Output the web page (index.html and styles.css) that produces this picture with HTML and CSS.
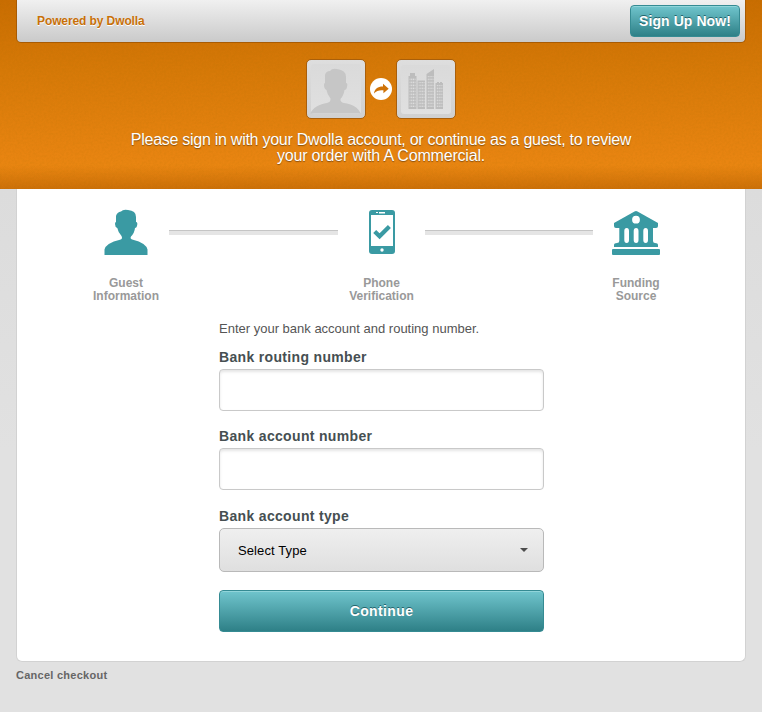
FILE: index.html
```html
<!DOCTYPE html>
<html lang="en">
<head>
<meta charset="utf-8">
<title>Dwolla Checkout</title>
<link rel="stylesheet" href="styles.css">
</head>
<body>
<header class="hero">
  <svg class="grain" width="100%" height="100%" aria-hidden="true">
    <filter id="grain"><feTurbulence type="fractalNoise" baseFrequency="0.45" numOctaves="2"/><feColorMatrix values="0 0 0 0 0.35  0 0 0 0 0.15  0 0 0 0 0  1 0 0 0 -0.35"/></filter>
    <rect width="100%" height="100%" filter="url(#grain)"/>
  </svg>
  <div class="topbar">
    <span class="powered">Powered by Dwolla</span>
    <button class="btn signup">Sign Up Now!</button>
  </div>
  <div class="parties">
    <div class="avatar">
      <svg width="58" height="58" viewBox="0 0 58 58">
        <rect x="4" y="4" width="50" height="50" rx="3" fill="url(#plate)"/>
        <path fill="#c6c6c6" d="M3.500 53.500C5 48 13 44 20 43Q24 42 23.500 38.500Q20 34 19.500 30Q17 29 17 25Q17 23 18 23V15Q19 11 23 11Q25 8 30 9Q39 10 39 17V23Q41 23 40 27Q39.500 30 37.500 30Q36.500 36 33.500 39Q33 42 37 43C45 44 52 48 53.500 53.500Z"/>
      </svg>
    </div>
    <svg class="arrow" width="22" height="22" viewBox="0 0 22 22">
      <circle cx="11" cy="11" r="11" fill="#fff"/>
      <path fill="#cf7308" d="M4 15.500C4.500 11 8 8.500 13 8.600V5.700L18.700 10.700L13.400 15.300V12.300C9.500 11.800 6.500 12.800 4 15.500Z"/>
    </svg>
    <div class="avatar">
      <svg width="58" height="58" viewBox="0 0 58 58">
        <defs>
          <linearGradient id="plate" x2="0" y2="1"><stop stop-color="#dadada"/><stop offset="1" stop-color="#e0e0e0"/></linearGradient>
          <pattern id="windows" width="2.2" height="3" patternUnits="userSpaceOnUse"><path fill="#dedede" d="M.4 .6h1.300v1.600H.4z"/></pattern>
        </defs>
        <rect x="4" y="5" width="50" height="49" rx="3" fill="url(#plate)"/>
        <path fill="#bdbdbd" d="M11.500 49V16H13V13H18V16H19.500V49ZM20.500 49V20.500H28V49ZM29.500 49V14L37 9V49ZM38.500 49V23H40V22H42V23H43V22H45V23H46V49Z"/>
        <path fill="url(#windows)" d="M12.500 18H18.500V47H12.500ZM21.500 22H27.500V47H21.500ZM30.500 16H36.500V47H30.500ZM39.500 25H45.500V47H39.500Z"/>
      </svg>
    </div>
  </div>
  <p class="intro"><span class="line1">Please sign in with your Dwolla account, or continue as a guest, to review</span><br><span class="line2">your order with A Commercial.</span></p>
</header>
<main class="sheet">
  <div class="steps">
    <div class="step guest">
      <svg width="44" height="48" viewBox="0 0 44 48">
        <path fill="#3a9aa3" d="M.5 47V41.500Q2 35 16 31.700Q19 31 17.500 28Q14 24 13.300 20Q11 19 11 16Q11 14 12 14V8Q13 4 17 3.500Q19 1 24 2Q32 2.500 32 9V14Q34 14 33 18Q32.500 20 31 20Q30.500 25 27 28.500Q25.500 31 29 31.700Q42 35 43.500 41.500V47Z"/>
      </svg>
      <div class="caption">Guest<br>Information</div>
    </div>
    <i class="rail"></i>
    <div class="step phone">
      <svg width="44" height="48" viewBox="0 0 44 48">
        <rect x="9" y="2" width="26" height="44" rx="3" fill="#3a9aa3"/>
        <path fill="#fff" d="M11 7H33V38H11ZM16 4H18V5H16ZM19 4H25V5.500H19Z"/>
        <circle cx="22" cy="42" r="1.700" fill="#fff"/>
        <path fill="none" stroke="#3a9aa3" stroke-width="4.200" d="M14.700 23.500L19.600 28.300L29.400 18.500"/>
      </svg>
      <div class="caption">Phone<br>Verification</div>
    </div>
    <i class="rail"></i>
    <div class="step bank">
      <svg width="48" height="48" viewBox="0 0 48 48">
        <path fill="#3a9aa3" fill-rule="evenodd" d="M2 18V15L22.500 3.500Q24 2.500 25.500 3.500L46 15V18Q46 20 44 20H4Q2 20 2 18ZM27.900 11.700A3.900 3.900 0 1 0 20.100 11.700A3.900 3.900 0 1 0 27.900 11.700Z"/>
        <path fill="#3a9aa3" d="M7.300 19H41V33Q41 35 43 35Q46 35 46 37V39H2V37Q2 35 5 35Q7.300 35 7.300 33Z"/>
        <path fill="#fff" d="M12.300 23Q12.300 20 14.700 20Q17 20 17 23V32Q17 35 14.700 35Q12.300 35 12.300 32ZM21.700 23Q21.700 20 24.100 20Q26.500 20 26.500 23V32Q26.500 35 24.100 35Q21.700 35 21.700 32ZM31.300 23Q31.300 20 33.700 20Q36 20 36 23V32Q36 35 33.700 35Q31.300 35 31.300 32Z"/>
        <path fill="#3a9aa3" d="M0 42Q0 41 1 41H47Q48 41 48 42V46Q48 47 47 47H1Q0 47 0 46Z"/>
      </svg>
      <div class="caption">Funding<br>Source</div>
    </div>
  </div>
  <form class="form">
    <p class="lead">Enter your bank account and routing number.</p>
    <label for="routing">Bank routing number</label>
    <input id="routing" type="text">
    <label for="account">Bank account number</label>
    <input id="account" type="text">
    <label class="type-label" for="type">Bank account type</label>
    <button class="select" id="type" type="button"><span>Select Type</span><i class="caret"></i></button>
    <button class="btn continue" type="button">Continue</button>
  </form>
</main>
<a class="cancel">Cancel checkout</a>
</body>
</html>
```

FILE: styles.css
```css
* { box-sizing: border-box; }
body { margin: 0; height: 712px; overflow: hidden; background: linear-gradient(#dcdcdc 189px, #e1e1e1 450px); font-family: "Liberation Sans", Arial, sans-serif; }
p { margin: 0; }
button { font-family: inherit; }
.hero { height: 189px; position: relative; background: linear-gradient(transparent 165px, rgba(177,91,0,.55) 189px), linear-gradient(#c96d02, #d67908 70px, #e88411 155px, #ec8912 189px); }
.grain { position: absolute; inset: 0; opacity: .22; }
.topbar { position: relative; margin: 0 16px; height: 43px; border: 1px solid #a85b03; border-top: 0; border-radius: 0 0 5px 5px; background: linear-gradient(#f0f0f0, #cacaca); display: flex; justify-content: space-between; padding: 5px 5px 0 20px; }
.powered { color: #c87008; font-size: 12px; font-weight: bold; line-height: 14px; padding-top: 9px; letter-spacing: -.1px; text-shadow: 0 1px #fff; }
.btn { border: 1px solid #358b93; border-radius: 4px; padding: 0; color: #fff; font-size: 14px; font-weight: bold; text-shadow: 0 -1px #24646b; background: linear-gradient(#70c5cd, #2e8087); box-shadow: inset 0 1px #91d5da; }
.signup { width: 110px; height: 32px; letter-spacing: .08px; }
.parties { position: relative; display: flex; justify-content: center; gap: 4px; align-items: center; padding-top: 16px; }
.avatar { width: 60px; height: 60px; border: 1px solid #a95f0b; border-radius: 5px; background: linear-gradient(#dedede, #d0d0d0); }
.avatar svg { display: block; }
.intro { position: relative; text-align: center; color: #fff; font-size: 16px; line-height: 16px; padding-top: 13px; text-shadow: 0 1px 1px #88500e; white-space: nowrap; }
.line1 { letter-spacing: -.27px; }
.line2 { letter-spacing: -.18px; }
.sheet { margin: 0 16px; height: 473px; background: #fff; border: 1px solid #d2d2d2; border-top: 0; border-radius: 0 0 6px 6px; }
.steps { display: flex; padding: 19px 0 0 66px; height: 130px; }
.step { flex: none; width: 86px; text-align: center; }
.phone { width: 87px; }
.step svg { display: block; margin: 0 auto; }
.caption { margin-top: 21px; color: #999; font-size: 12px; line-height: 13px; font-weight: bold; }
.rail { flex: none; width: 169px; height: 5px; margin-top: 22px; background: #e5e5e5; border-top: 1px solid #c5c5c5; }
.phone + .rail { width: 168px; }
.form { width: 325px; margin-left: 202px; display: flex; flex-direction: column; }
.lead { color: #555; font-size: 13px; line-height: 16px; margin-top: 2px; margin-bottom: 12px; white-space: nowrap; }
label { color: #464f52; font-size: 14px; line-height: 16px; font-weight: bold; letter-spacing: .33px; margin-bottom: 4px; align-self: flex-start; white-space: nowrap; }
input { height: 42px; border: 1px solid #c9c9c9; border-radius: 4px; margin: 0 0 17px; box-shadow: inset 0 2px 3px #e5e5e5; }
.type-label { margin-top: 1px; }
.select { height: 44px; border: 1px solid #b9b9b9; border-radius: 5px; background: linear-gradient(#efefef, #dfdfdf); display: flex; align-items: center; justify-content: space-between; padding: 0 15px 0 18px; font-size: 13px; letter-spacing: .1px; color: #000; }
.caret { border: 4px solid transparent; border-top-color: #4d4d4d; border-bottom: 0; }
.continue { height: 42px; margin-top: 18px; letter-spacing: .38px; }
.cancel { display: inline-block; margin: 7px 0 0 16px; color: #666; font-size: 11px; line-height: 13px; font-weight: bold; letter-spacing: .26px; }
```
